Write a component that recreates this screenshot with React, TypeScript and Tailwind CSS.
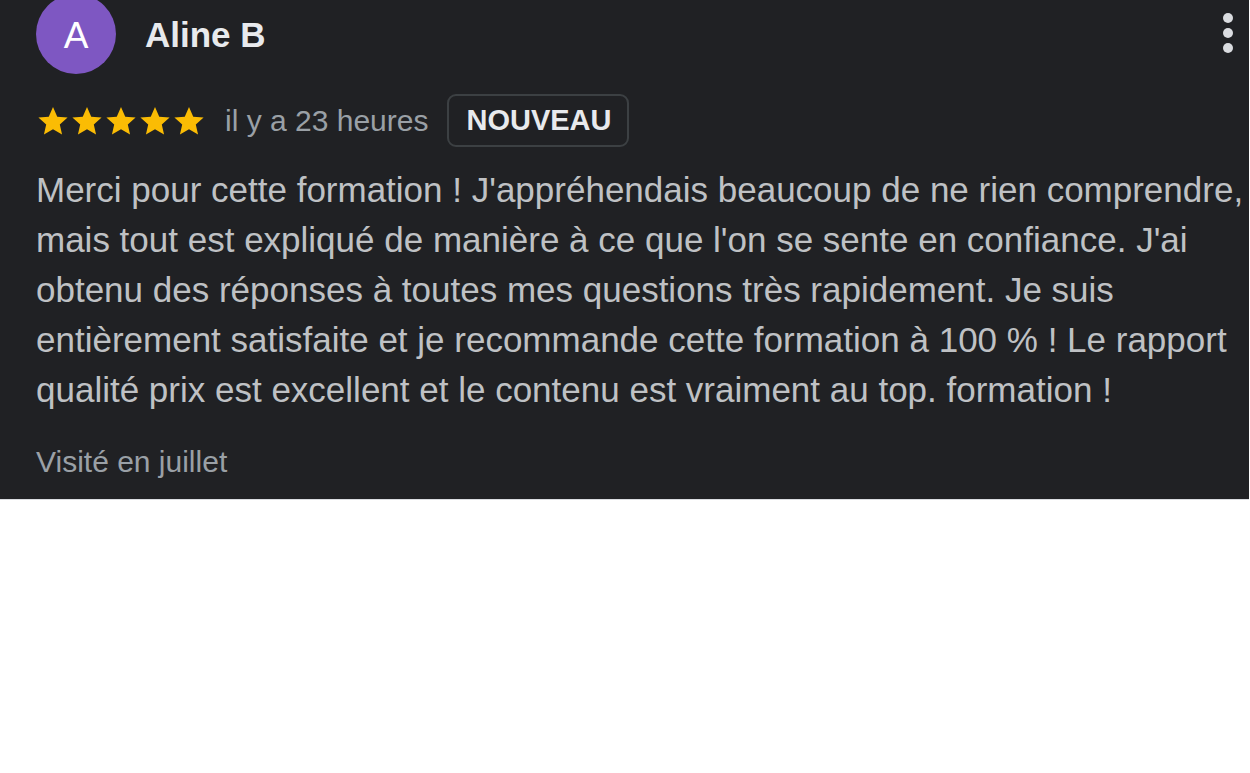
import React from 'react';

const Star = () => (
  <svg viewBox="0 0 24 24" className="w-[34px] h-[34px]" fill="#fbbc04">
    <path d="M12 2.2l3 6.8 7.3.6-5.5 4.8 1.6 7.2L12 17.8l-6.4 3.8 1.6-7.2-5.5-4.8 7.3-.6z" />
  </svg>
);

export default function App() {
  return (
    <div className="min-h-screen bg-white font-['Liberation_Sans',Arial,sans-serif]">
      <div className="w-[1249px] h-[500px] bg-[#202124] border-b border-[#dadce0] relative overflow-hidden">
        <div className="flex items-center pl-[36px] -mt-[6px]">
          <div className="w-[80px] h-[80px] rounded-full bg-[#7e57c2] flex items-center justify-center text-white text-[37px] pt-[4px]">A</div>
          <div className="ml-[29px] pt-[2px] text-[35px] font-bold text-[#e8eaed]">Aline B</div>
        </div>
        <div className="absolute right-[16px] top-[13px] flex flex-col gap-[5px]">
          <span className="w-[10px] h-[10px] rounded-full bg-[#dadce0]" />
          <span className="w-[10px] h-[10px] rounded-full bg-[#dadce0]" />
          <span className="w-[10px] h-[10px] rounded-full bg-[#dadce0]" />
        </div>
        <div className="flex items-center pl-[36px] mt-[20px]">
          <div className="flex">
            <Star /><Star /><Star /><Star /><Star />
          </div>
          <span className="ml-[19px] text-[30px] text-[#9aa0a6]">il y a 23 heures</span>
          <span className="ml-[19px] h-[53px] pl-[17px] pr-[16px] flex items-center border-2 border-[#3c4043] rounded-[9px] text-[29px] font-bold text-[#e8eaed]">NOUVEAU</span>
        </div>
        <p className="pl-[36px] pr-[4px] mt-[18px] text-[35px] leading-[50px] text-[#bfc1c4]">
          Merci pour cette formation ! J'appréhendais beaucoup de ne rien comprendre, mais tout est expliqué de manière à ce que l'on se sente en confiance. J'ai obtenu des réponses à toutes mes questions très rapidement. Je suis entièrement satisfaite et je recommande cette formation à 100 % ! Le rapport qualité prix est excellent et le contenu est vraiment au top. formation !
        </p>
        <div className="pl-[36px] mt-[24px] text-[30px] text-[#9aa0a6]">Visité en juillet</div>
      </div>
    </div>
  );
}
